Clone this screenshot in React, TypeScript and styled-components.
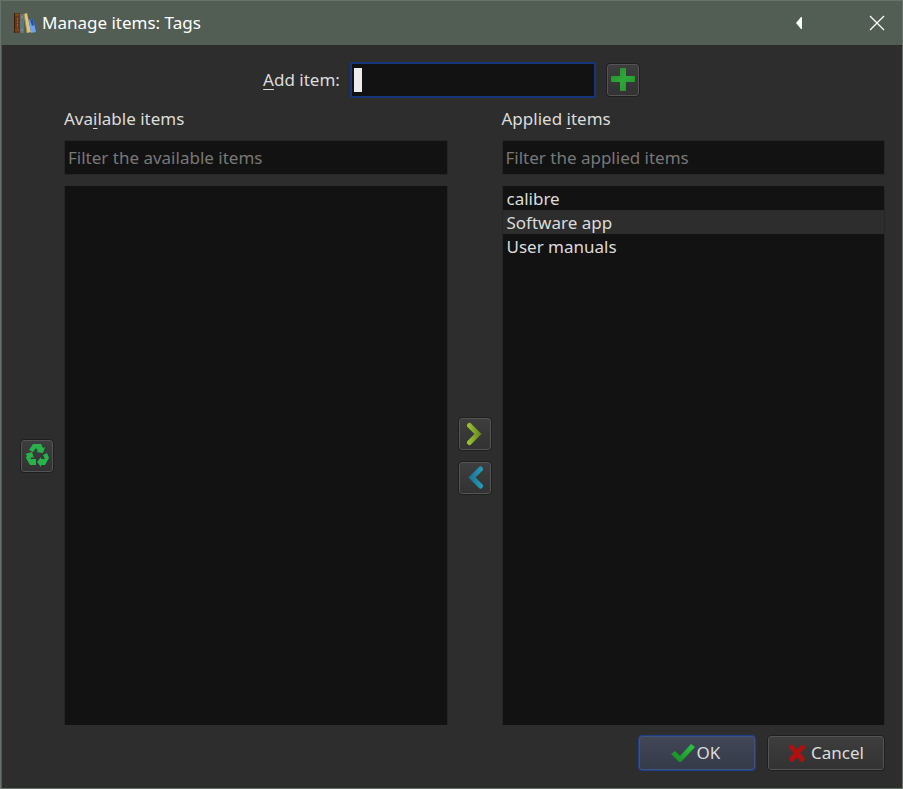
import React from "react";
import styled, { createGlobalStyle } from "styled-components";

const GlobalStyle = createGlobalStyle`
  * { box-sizing: border-box; }
  body { margin: 0; background: #2d2d2d; }
  body, button, input {
    font-family: "Noto Sans", "Open Sans", sans-serif;
    font-size: 17px;
    line-height: 24px;
  }
`;

const Dialog = styled.main`
  display: flex;
  flex-direction: column;
  min-height: 100vh;
  color: #dcdcdc;
  background: #2d2d2d;
  border: 1px solid #66726a;
  box-shadow: inset 1px 0 #4d564f;
`;

const TitleBar = styled.header`
  display: flex;
  align-items: center;
  height: 44px;
  padding: 0 9px 0 12px;
  color: #ffffff;
  background: #525d54;
`;

const Title = styled.h1`
  flex: 1;
  margin: 0 0 0 5px;
  font-size: 17px;
  font-weight: 400;
  line-height: 24px;
`;

const TitleButton = styled.button`
  display: grid;
  place-items: center;
  width: 32px;
  height: 32px;
  margin-left: 46px;
  padding: 0;
  color: #ffffff;
  background: none;
  border: 0;
`;

const Content = styled.div`
  flex: 1;
  display: flex;
  flex-direction: column;
  padding: 17px 17px 17px 19px;
`;

const AddRow = styled.form`
  display: flex;
  align-items: center;
  justify-content: center;
  height: 36px;
  padding-right: 2px;
`;

const FieldWrap = styled.div`
  position: relative;
  width: 246px;
  margin: 0 10px;
`;

const Caret = styled.span`
  position: absolute;
  top: 6px;
  left: 4px;
  width: 8px;
  height: 24px;
  background: #efebec;
  pointer-events: none;
`;

const TextField = styled.input<{ $active?: boolean }>`
  display: block;
  width: 100%;
  height: ${(p) => (p.$active ? 36 : 35)}px;
  padding: 0 3px;
  color: #dcdcdc;
  caret-color: transparent;
  background: #121212;
  border: ${(p) => (p.$active ? "2px solid #17357c" : "1px solid #262626")};
  border-radius: 2px;
  outline: 0;
  &::placeholder { color: #787878; opacity: 1; }
`;

const Columns = styled.div`
  flex: 1;
  display: grid;
  grid-template-columns: 34px 1fr 34px 1fr;
  grid-template-rows: 42px 35px 1fr;
  column-gap: 10px;
`;

const ColumnLabel = styled.label<{ $column: number }>`
  grid-column: ${(p) => p.$column};
  grid-row: 1;
  align-self: center;
`;

const FilterCell = styled.div<{ $column: number }>`
  grid-column: ${(p) => p.$column};
  grid-row: 2;
`;

const ItemList = styled.ul<{ $column: number }>`
  grid-column: ${(p) => p.$column};
  grid-row: 3;
  margin: 11px 0 0;
  padding: 0;
  list-style: none;
  background: #121212;
  border: solid #262626;
  border-width: 0 1px;
`;

const Item = styled.li<{ $alternate: boolean }>`
  height: 24px;
  padding: 0 4px;
  line-height: 26px;
  background: ${(p) => (p.$alternate ? "#2d2d2d" : "transparent")};
`;

const ToolStack = styled.div<{ $column: number }>`
  grid-column: ${(p) => p.$column};
  grid-row: 3;
  display: flex;
  flex-direction: column;
  justify-content: center;
  gap: 10px;
  padding-top: 11px;
`;

const Button = styled.button`
  display: flex;
  align-items: center;
  justify-content: center;
  padding: 0;
  color: #dcdcdc;
  background: linear-gradient(#3e3e3e, #323232);
  border: 1px solid #1f1f1f;
  border-radius: 4px;
  box-shadow: inset 0 0 0 1px #545454;
`;

const IconButton = styled(Button)`
  width: 34px;
  height: 34px;
`;

const Footer = styled.footer`
  display: flex;
  justify-content: flex-end;
  gap: 11px;
  margin-top: 10px;
`;

const ActionButton = styled(Button)<{ $primary?: boolean }>`
  gap: 2px;
  width: 118px;
  height: 36px;
  padding-right: 3px;
  ${(p) =>
    p.$primary &&
    `
    background: linear-gradient(#424757, #343a48);
    border-color: #1d3f88;
    box-shadow: inset 0 0 0 1px #3f5381, 0 0 1px #1d3f88;
  `}
`;

const Key = styled.u`
  text-decoration-thickness: 1px;
  text-underline-offset: 3px;
`;

const BooksIcon = () => (
  <svg width="24" height="24" viewBox="0 0 24 24" aria-hidden="true">
    <path d="M1 2h6v20H1z" fill="#6b3713" />
    <path d="M1 2h1v20H1z" fill="#3a1b0a" />
    <path d="M2 4h4M2 19h4" stroke="#8f581f" />
    <path d="M4.500 7v10" stroke="#a06a2c" strokeDasharray="2 1" />
    <path d="M7 3h4v19H7z" fill="#5d7680" />
    <path d="M8 6h2M8 19h2" stroke="#8ca0a8" />
    <path d="M11 3l3-1 4 19-4 1z" fill="#dcc47c" />
    <path d="M11 3l3 19" stroke="#a58b45" />
    <path d="M16 9l4-1 3 13-5 1z" fill="#6ba3f3" />
    <path d="M17 9l3-1 1 6-2 1z" fill="#1d50b5" />
  </svg>
);

const PlusIcon = () => (
  <svg width="24" height="24" viewBox="0 0 24 24" aria-hidden="true">
    <defs>
      <linearGradient id="plus" x2="1" y2="1">
        <stop stopColor="#208b25" />
        <stop offset=".5" stopColor="#30a83a" />
        <stop offset="1" stopColor="#218c28" />
      </linearGradient>
    </defs>
    <path d="M10 0h4q1 0 1 1v7h8q1 0 1 1v4q0 1-1 1h-8v8q0 1-1 1h-4q-1 0-1-1v-8H1q-1 0-1-1V9q0-1 1-1h8V1q0-1 1-1z" fill="url(#plus)" />
  </svg>
);

const RecycleIcon = () => (
  <svg width="24" height="24" viewBox="0 0 24 24" fill="#27b34a" aria-hidden="true">
    <path d="M8 0h8l2 4 2-1-2 6-7-1 2-1-2-3-3 4-4-2z" />
    <path d="M0 10l7-2 2 6-2-1-2 2h6v6H5l-4-7 1-3z" />
    <path d="M18 11l4-2 2 5-4 7h-4v2l-4-5 4-5v2h4z" />
  </svg>
);

const ArrowIcon = ({ left = false }: { left?: boolean }) => {
  const id = left ? "arrow-left" : "arrow-right";
  return (
    <svg width="24" height="24" viewBox="0 0 24 24" aria-hidden="true">
      <defs>
        <linearGradient id={id} gradientUnits="userSpaceOnUse" x1="5" y1="12" x2="19" y2="12">
          <stop stopColor={left ? "#1a6e8c" : "#9bc331"} />
          <stop offset="1" stopColor={left ? "#2799b8" : "#5e8220"} />
        </linearGradient>
      </defs>
      <path
        d={left ? "M17.500 3L9 11.500l8.500 8.500" : "M6.500 3.500L15 12l-8.500 8.500"}
        fill="none"
        stroke={`url(#${id})`}
        strokeWidth="5"
        strokeLinecap="round"
      />
    </svg>
  );
};

const CheckIcon = () => (
  <svg width="24" height="24" viewBox="0 0 24 24" aria-hidden="true">
    <defs>
      <linearGradient id="check" x1="0" y1="1" x2="1" y2="0">
        <stop stopColor="#178220" />
        <stop offset="1" stopColor="#2ecb43" />
      </linearGradient>
    </defs>
    <path d="M0 13l4-3 5 5L20 3l4 3L10 21H8z" fill="url(#check)" />
  </svg>
);

const CrossIcon = () => (
  <svg width="24" height="24" viewBox="0 0 24 24" aria-hidden="true">
    <path d="M5 4h3l4 5 4-5h3l1 3-5 5 5 5-2 4h-2l-4-5-4 5H6l-2-4 5-5-5-5z" fill="#b01010" />
  </svg>
);

const applied = ["calibre", "Software app", "User manuals"];

export default function App() {
  return (
    <>
      <GlobalStyle />
      <Dialog>
        <TitleBar>
          <BooksIcon />
          <Title>Manage items: Tags</Title>
          <TitleButton type="button" aria-label="Back">
            <svg width="8" height="14" viewBox="0 0 8 14">
              <path d="M7 1v12H6L1 7l5-6z" fill="currentColor" />
            </svg>
          </TitleButton>
          <TitleButton type="button" aria-label="Close">
            <svg width="16" height="16" viewBox="0 0 16 16">
              <path d="M1 1l14 14M15 1L1 15" stroke="currentColor" strokeWidth="1.300" />
            </svg>
          </TitleButton>
        </TitleBar>
        <Content>
          <AddRow onSubmit={(e) => e.preventDefault()}>
            <label htmlFor="add"><Key>A</Key>dd item:</label>
            <FieldWrap>
              <TextField id="add" type="text" $active />
              <Caret />
            </FieldWrap>
            <IconButton type="submit" aria-label="Add"><PlusIcon /></IconButton>
          </AddRow>
          <Columns>
            <ToolStack $column={1}>
              <IconButton type="button" aria-label="Delete items"><RecycleIcon /></IconButton>
            </ToolStack>
            <ColumnLabel $column={2} htmlFor="available">Ava<Key>i</Key>lable items</ColumnLabel>
            <FilterCell $column={2}>
              <TextField id="available" type="text" placeholder="Filter the available items" />
            </FilterCell>
            <ItemList $column={2} aria-label="Available items" />
            <ToolStack $column={3}>
              <IconButton type="button" aria-label="Apply"><ArrowIcon /></IconButton>
              <IconButton type="button" aria-label="Remove"><ArrowIcon left /></IconButton>
            </ToolStack>
            <ColumnLabel $column={4} htmlFor="applied">Applied <Key>i</Key>tems</ColumnLabel>
            <FilterCell $column={4}>
              <TextField id="applied" type="text" placeholder="Filter the applied items" />
            </FilterCell>
            <ItemList $column={4} aria-label="Applied items">
              {applied.map((name, i) => (
                <Item key={name} $alternate={i % 2 === 1}>{name}</Item>
              ))}
            </ItemList>
          </Columns>
          <Footer>
            <ActionButton type="button" $primary><CheckIcon />OK</ActionButton>
            <ActionButton type="button"><CrossIcon />Cancel</ActionButton>
          </Footer>
        </Content>
      </Dialog>
    </>
  );
}
